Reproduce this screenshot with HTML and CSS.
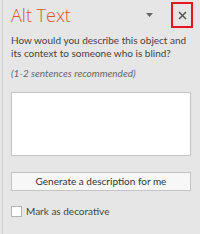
FILE: index.html
```html
<!DOCTYPE html>
<html>
<head>
<meta charset="utf-8">
<link rel="stylesheet" href="styles.css">
</head>
<body>
<div class="pane">
  <div class="header">
    <div class="title">Alt Text</div>
    <div class="menu"><svg width="7" height="4" viewBox="0 0 7 4"><path d="M0 0H7L3.5 4Z" fill="#666"/></svg></div>
    <div class="close"><svg width="9" height="9" viewBox="0 0 9 9"><path d="M1 1L8 8M8 1L1 8" stroke="#555" stroke-width="1.5"/></svg></div>
  </div>
  <p class="question">How would you describe this object and its context to someone who is blind?</p>
  <p class="hint">(1-2 sentences recommended)</p>
  <div class="textbox"></div>
  <div class="button">Generate a description for me</div>
  <label class="check"><span class="box"></span><span>Mark as decorative</span></label>
</div>
</body>
</html>
```
FILE: styles.css
```css
html, body {
  margin: 0;
  padding: 0;
  background: #e6e6e6;
  height: 100%;
}
body {
  font-family: "Lato", "Open Sans", sans-serif;
  color: #444;
}
.pane {
  margin-left: 2px;
  border-left: 1px solid #d0d0d0;
  height: 234px;
  box-sizing: border-box;
  padding: 2px 7px 0 8px;
  display: flex;
  flex-direction: column;
}
.header {
  display: flex;
  align-items: center;
  height: 26px;
}
.title {
  flex: 1;
  color: #d8572f;
  font-family: "Open Sans", sans-serif;
  font-size: 18px;
  font-weight: 300;
  line-height: 26px;
}
.menu {
  width: 7px;
  height: 4px;
  display: flex;
  margin-right: 18px;
}
.close {
  width: 18px;
  height: 22px;
  border: 2px solid #e8141e;
  display: flex;
  align-items: center;
  justify-content: center;
}
.question {
  margin: 6px 0 0;
  font-size: 10px;
  line-height: 13px;
}
.hint {
  margin: 6px 0 0;
  font-size: 10px;
  font-style: italic;
  color: #666;
  line-height: 15px;
}
.textbox {
  margin-top: 11px;
  height: 64px;
  background: #fff;
  border: 1px solid #c4c4c4;
  box-sizing: border-box;
  margin-right: 2px;
}
.button {
  margin-top: 16px;
  height: 19px;
  box-sizing: border-box;
  border: 1px solid #c4c4c4;
  background: #f7f7f7;
  font-size: 10px;
  line-height: 17px;
  text-align: center;
  color: #333;
  margin-right: 2px;
}
.check {
  margin-top: 14px;
  display: flex;
  align-items: center;
  gap: 4px;
  font-size: 10px;
  color: #444;
}
.box {
  width: 9px;
  height: 9px;
  background: #fff;
  border: 1px solid #b4b4b4;
}
```
